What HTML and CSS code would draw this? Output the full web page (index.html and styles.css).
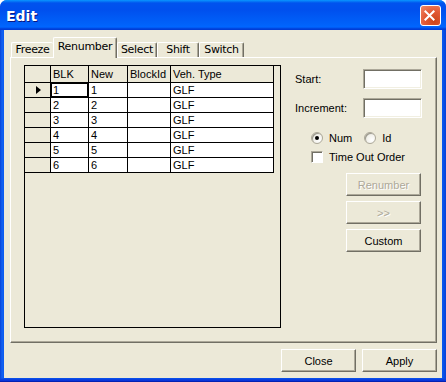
FILE: index.html
```html
<!DOCTYPE html>
<html>
<head>
<meta charset="utf-8">
<link rel="stylesheet" href="styles.css">
</head>
<body>
<div class="window">
  <div class="titlebar">
    <span class="title">Edit</span>
    <span class="close-btn">
      <svg width="21" height="21" viewBox="0 0 21 21"><path d="M6 6 L15 15 M15 6 L6 15" stroke="#fff" stroke-width="2.2" stroke-linecap="square"/></svg>
    </span>
  </div>
  <div class="client">
    <div class="tabs">
      <div class="tab t-freeze">Freeze</div>
      <div class="tab tab-active t-renumber">Renumber</div>
      <div class="tab t-select">Select</div>
      <div class="tab t-shift">Shift</div>
      <div class="tab t-switch">Switch</div>
    </div>
    <div class="panel">
      <div class="datagrid">
        <div class="cell hdr"></div>
        <div class="cell hdr">BLK</div>
        <div class="cell hdr">New</div>
        <div class="cell hdr">BlockId</div>
        <div class="cell hdr">Veh. Type</div>

        <div class="cell ind"><span class="arrow"></span></div>
        <div class="cell focus">1</div>
        <div class="cell">1</div>
        <div class="cell"></div>
        <div class="cell">GLF</div>

        <div class="cell ind"></div>
        <div class="cell">2</div>
        <div class="cell">2</div>
        <div class="cell"></div>
        <div class="cell">GLF</div>

        <div class="cell ind"></div>
        <div class="cell">3</div>
        <div class="cell">3</div>
        <div class="cell"></div>
        <div class="cell">GLF</div>

        <div class="cell ind"></div>
        <div class="cell">4</div>
        <div class="cell">4</div>
        <div class="cell"></div>
        <div class="cell">GLF</div>

        <div class="cell ind"></div>
        <div class="cell">5</div>
        <div class="cell">5</div>
        <div class="cell"></div>
        <div class="cell">GLF</div>

        <div class="cell ind"></div>
        <div class="cell">6</div>
        <div class="cell">6</div>
        <div class="cell"></div>
        <div class="cell">GLF</div>
      </div>
      <div class="side">
        <div class="field-row">
          <span>Start:</span>
          <span class="textbox"></span>
        </div>
        <div class="field-row row-inc">
          <span>Increment:</span>
          <span class="textbox"></span>
        </div>
        <div class="radio-row">
          <span class="opt"><span class="radio checked"></span>Num</span>
          <span class="opt opt-id"><span class="radio"></span>Id</span>
        </div>
        <div class="check-row">
          <span class="checkbox"></span>Time Out Order
        </div>
        <div class="btn side-btn disabled first">Renumber</div>
        <div class="btn side-btn disabled">&gt;&gt;</div>
        <div class="btn side-btn">Custom</div>
      </div>
    </div>
    <div class="bottom">
      <div class="btn">Close</div>
      <div class="btn">Apply</div>
    </div>
  </div>
</div>
</body>
</html>
```

FILE: styles.css
```css
html, body {
  margin: 0;
  padding: 0;
  background: #fff;
}
body {
  font-family: "Liberation Sans", Arial, sans-serif;
  font-size: 11px;
  color: #000;
}
.window {
  width: 446px;
  height: 382px;
  display: flex;
  flex-direction: column;
  background:
    linear-gradient(to top, #00138c 0, #0831d9 1px, #0a44e0 3px, rgba(10, 68, 224, 0) 4px),
    linear-gradient(to right, #0842d8 0, #1262f0 2px, #0a5af2 4px, #0a5af2 442px, #0842d8 446px);
  border-radius: 7px 7px 0 0;
  overflow: hidden;
}
.titlebar {
  height: 30px;
  display: flex;
  align-items: center;
  justify-content: space-between;
  padding: 0 5px 0 6px;
  background: linear-gradient(#0997ff 0, #0053ee 3px, #0050ee 10px, #0062fa 24px, #0066ff 27px, #003dd7 29px, #003dd7 30px);
  box-sizing: border-box;
}
.title {
  color: #fff;
  font-family: "DejaVu Sans", sans-serif;
  font-weight: bold;
  font-size: 14px;
  text-shadow: 1px 1px 0 #0a1883;
  margin-top: 1px;
}
.close-btn {
  width: 21px;
  height: 21px;
  box-sizing: border-box;
  border: 1px solid #fff;
  border-radius: 3px;
  background: radial-gradient(circle at 70% 80%, #cc4418 0, #e25a36 50%, #f08968 100%);
  display: flex;
  margin-top: 1px;
}
.close-btn svg {
  position: relative;
  left: -1px;
  top: -1px;
}
.client {
  flex: 1;
  margin: 0 4px 4px 4px;
  background: #ece9d8;
  padding: 7px 5px 6px 6px;
  display: flex;
  flex-direction: column;
}
.tabs {
  display: flex;
  align-items: flex-end;
  height: 20px;
  position: relative;
  z-index: 1;
}
.tab {
  box-sizing: border-box;
  height: 15px;
  background: #ece9d8;
  border-top: 1px solid #fff;
  border-left: 1px solid #fff;
  border-right: 1px solid #716f64;
  box-shadow: inset -1px 0 0 #aca899;
  border-radius: 2px 2px 0 0;
  text-align: center;
  line-height: 13px;
  font-family: "DejaVu Sans", sans-serif;
  font-size: 11px;
  letter-spacing: -0.3px;
}
.t-freeze { width: 42px; margin-left: 1px; border-right: none; box-shadow: none; }
.t-renumber { width: 64px; }
.t-select { width: 40px; }
.t-shift { width: 42px; }
.t-switch { width: 45px; }
.tab-active {
  height: 21px;
  margin-bottom: -1px;
  line-height: 17px;
}
.panel {
  box-sizing: border-box;
  height: 286px;
  border-top: 1px solid #fff;
  border-left: 1px solid #fff;
  border-right: 1px solid #716f64;
  border-bottom: 1px solid #716f64;
  box-shadow: inset -1px -1px 0 #aca899;
  display: flex;
  padding: 7px 0 0 13px;
  gap: 14px;
}
.datagrid {
  box-sizing: border-box;
  width: 257px;
  height: 263px;
  border: 1px solid #000;
  display: grid;
  grid-template-columns: 26px 38px 39px 43px 103px;
  grid-auto-rows: 15px;
  grid-template-rows: 17px;
  align-content: start;
  background: #ece9d8;
}
.cell {
  box-sizing: border-box;
  border-right: 1px solid #000;
  border-bottom: 1px solid #000;
  background: #fff;
  padding-left: 2px;
  line-height: 14px;
  white-space: nowrap;
  overflow: hidden;
}
.hdr {
  background: #ece9d8;
  line-height: 16px;
}
.ind {
  background: #ece9d8;
  position: relative;
}
.arrow {
  position: absolute;
  left: 11px;
  top: 3px;
  width: 0;
  height: 0;
  border-left: 5px solid #000;
  border-top: 4.5px solid transparent;
  border-bottom: 4.5px solid transparent;
}
.focus {
  box-shadow: inset 0 0 0 1px #000;
}
.side {
  width: 127px;
  display: flex;
  flex-direction: column;
  padding-top: 4px;
}
.field-row {
  display: flex;
  justify-content: space-between;
  align-items: center;
  height: 20px;
}
.row-inc {
  margin-top: 9px;
}
.textbox {
  box-sizing: border-box;
  width: 59px;
  height: 20px;
  background: #fff;
  border-top: 1px solid #aca899;
  border-left: 1px solid #aca899;
  border-right: 1px solid #fff;
  border-bottom: 1px solid #fff;
  box-shadow: inset 1px 1px 0 #716f64, inset -1px -1px 0 #f1efe2;
}
.radio-row {
  display: flex;
  align-items: center;
  height: 14px;
  margin-top: 13px;
  padding-left: 16px;
}
.opt {
  display: flex;
  align-items: center;
}
.opt-id {
  margin-left: 12px;
}
.radio {
  box-sizing: border-box;
  width: 12px;
  height: 12px;
  border-radius: 50%;
  background: radial-gradient(circle at 70% 70%, #fff 0, #f3f2ec 50%, #d8d6cc 100%);
  border: 1px solid #aca899;
  box-shadow: inset 1px 1px 0 #9d9b8f;
  margin-right: 6px;
  position: relative;
}
.radio.checked::after {
  content: "";
  position: absolute;
  left: 3px;
  top: 3px;
  width: 4px;
  height: 4px;
  border-radius: 50%;
  background: #000;
}
.check-row {
  display: flex;
  align-items: center;
  height: 14px;
  margin-top: 5px;
  padding-left: 16px;
}
.checkbox {
  box-sizing: border-box;
  width: 12px;
  height: 12px;
  background: #fff;
  border-top: 1px solid #aca899;
  border-left: 1px solid #aca899;
  border-right: 1px solid #fff;
  border-bottom: 1px solid #fff;
  box-shadow: inset 1px 1px 0 #716f64;
  margin-right: 6px;
}
.btn {
  box-sizing: border-box;
  width: 75px;
  height: 23px;
  background: #ece9d8;
  border-top: 1px solid #fff;
  border-left: 1px solid #fff;
  border-right: 1px solid #716f64;
  border-bottom: 1px solid #716f64;
  box-shadow: inset -1px -1px 0 #aca899;
  display: flex;
  align-items: center;
  justify-content: center;
  font-size: 11px;
}
.side-btn {
  align-self: flex-end;
  margin-right: 1px;
  margin-top: 5px;
}
.side-btn.first {
  margin-top: 9px;
}
.disabled {
  color: #aca899;
  text-shadow: 1px 1px 0 #fff;
}
.bottom {
  display: flex;
  justify-content: flex-end;
  gap: 6px;
  margin-top: 6px;
}
```
